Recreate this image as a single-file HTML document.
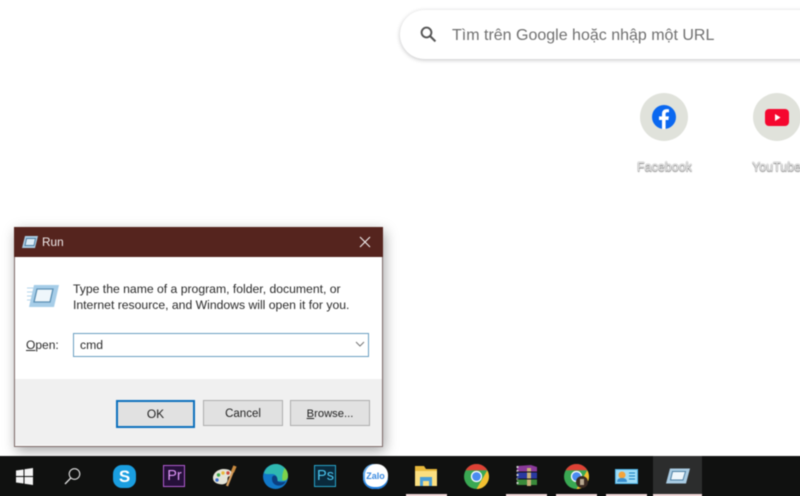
<!DOCTYPE html>
<html><head><meta charset="utf-8"><style>
html,body{margin:0;padding:0;width:800px;height:496px;overflow:hidden;background:#fff;font-family:"Liberation Sans",sans-serif}
#o{position:absolute;left:0;top:0;width:800px;height:496px;overflow:hidden}
#w{position:absolute;left:0;top:0;width:800px;height:496px;filter:blur(.4px)}
.a{position:absolute}
.t{position:absolute;white-space:nowrap}
.btn{position:absolute;top:400px;height:24px;background:#e1e1e1;border:1px solid #adadad;text-align:center;font-size:12px;line-height:26px;color:#222}
</style></head><body><div id="o"><div id="w">

<!-- search box -->
<div class="a" style="left:400px;top:10px;width:440px;height:49px;border-radius:25px;background:#fff;box-shadow:0 1px 4px rgba(32,33,36,.28)"></div>
<svg class="a" style="left:418px;top:24px" width="20" height="20" viewBox="0 0 20 20"><circle cx="8.500" cy="8.500" r="4.900" fill="none" stroke="#555" stroke-width="1.900"/><path d="M12 12l5.400 5.400" stroke="#555" stroke-width="2.100"/></svg>
<div class="t" style="left:452px;top:26px;font-size:16px;line-height:19px;color:#707070">Tìm trên Google hoặc nhập một URL</div>

<!-- shortcuts -->
<div class="a" style="left:640px;top:93px;width:48px;height:48px;border-radius:50%;background:#e0e2db"></div>
<svg class="a" style="left:652px;top:105px" width="24" height="24" viewBox="0 0 24 24"><circle cx="12" cy="12" r="12" fill="#0b68f0"/><path d="M10 24v-9H7v-3.600h3V9c0-3.200 1.800-4.900 4.700-4.900 1.100 0 2.300.2 2.300.2v3h-1.400c-1.600 0-2 .9-2 1.900v2.200h3.300l-.5 3.600h-2.800v9z" fill="#fff"/></svg>
<div class="t" style="left:637px;top:160px;font-size:12.500px;line-height:15px;color:#e6e6e6;text-shadow:0 0 1px #555,0 1px 1px #888">Facebook</div>

<div class="a" style="left:753px;top:93px;width:48px;height:48px;border-radius:50%;background:#e0e2db"></div>
<div class="a" style="left:765px;top:109px;width:24px;height:17px;border-radius:4px;background:#f5072f"></div>
<svg class="a" style="left:765px;top:109px" width="24" height="17"><path d="M10 5l5.500 3.500L10 12z" fill="#fff"/></svg>
<div class="t" style="left:752px;top:160px;font-size:12.500px;line-height:15px;color:#e6e6e6;text-shadow:0 0 1px #555,0 1px 1px #888">YouTube</div>

<!-- dialog -->
<div class="a" style="left:14px;top:227px;width:367px;height:218px;background:#fff;border:1px solid #7e6a68;box-shadow:2px 4px 12px rgba(0,0,0,.35)"></div>
<div class="a" style="left:14px;top:227px;width:369px;height:30px;background:#55241e"></div>
<svg class="a" style="left:21px;top:235px" width="18" height="14" viewBox="0 0 18 14"><path d="M4 1h13l-3 12H1z" fill="#a9cbe2"/><path d="M5.500 3.500h9l-1.500 7H4z" fill="#dcebf5" stroke="#4d7fa3"/></svg>
<div class="t" style="left:42px;top:235px;font-size:11.800px;line-height:15px;color:#f0eaea">Run</div>
<svg class="a" style="left:359px;top:236px" width="12" height="12"><path d="M1 1l10 10M11 1L1 11" stroke="#f2eeee" stroke-width="1.100"/></svg>

<svg class="a" style="left:26px;top:284px" width="34" height="24" viewBox="0 0 34 24"><path d="M8 1h25l-5 22H3z" fill="#a6cde8"/><path d="M1 4h7M1 8h6M1 12h5M1 16h4" stroke="#b4d4ea"/><path d="M11 5h16l-3 13H8z" fill="#eef6fb" stroke="#5b90b4" stroke-width="1.300"/></svg>
<div class="t" style="left:73px;top:281px;font-size:12.200px;line-height:16px;color:#2a2a2a">Type the name of a program, folder, document, or<br>Internet resource, and Windows will open it for you.</div>

<div class="t" style="left:26px;top:337px;font-size:12px;line-height:16px;color:#2a2a2a"><u>O</u>pen:</div>
<div class="a" style="left:73px;top:333px;width:294px;height:22px;border:1px solid #6a9fc2;background:#fff"></div>
<div class="t" style="left:80px;top:337px;font-size:12.200px;line-height:16px;color:#2a2a2a">cmd</div>
<svg class="a" style="left:355px;top:341px" width="10" height="7"><path d="M1 1l4 4 4-4" fill="none" stroke="#777" stroke-width="1"/></svg>

<div class="a" style="left:15px;top:379px;width:367px;height:66px;background:#f0f0f0"></div>
<div class="btn" style="left:116px;width:75px;border:2px solid #0d70bd;line-height:24px">OK</div>
<div class="btn" style="left:203px;width:78px;font-size:11.500px">Cancel</div>
<div class="btn" style="left:290px;width:78px;font-size:11.200px"><u>B</u>rowse...</div>

<!-- taskbar -->
<div class="a" style="left:-6px;top:456px;width:812px;height:46px;background:#101110"></div>
<div class="a" style="left:653px;top:456px;width:49px;height:46px;background:#2c2d2d"></div>
<svg class="a" style="left:16px;top:468px" width="17" height="17" viewBox="0 0 17 17"><path d="M0 2.500l7.500-1v6.500H0zM8.500 1.300L17 0v8H8.500zM0 9h7.500v6.500L0 14.500zM8.500 9H17v8l-8.500-1.300z" fill="#f4f4f4"/></svg>
<svg class="a" style="left:64px;top:467px" width="18" height="18" viewBox="0 0 18 18"><circle cx="10.500" cy="7" r="5.300" fill="none" stroke="#ddd" stroke-width="1.100"/><path d="M6.800 11L1 17" stroke="#ddd" stroke-width="1.300"/></svg>

<div class="a" style="left:113px;top:465px;width:23px;height:23px;border-radius:9px;background:#1a9ee0"></div>
<div class="t" style="left:113px;top:465px;width:23px;text-align:center;font-size:17px;line-height:23px;font-weight:bold;color:#fff">S</div>

<div class="a" style="left:163px;top:465px;width:20px;height:20px;border:1.500px solid #b05bd0;background:#26103a"></div>
<div class="t" style="left:163px;top:465px;width:23px;text-align:center;font-size:14.500px;line-height:23px;color:#dc94f4">Pr</div>

<svg class="a" style="left:212px;top:463px" width="26" height="26" viewBox="0 0 26 26"><path d="M1 15c0-5 5-9 11-9 5 0 8 2 8 5 0 2-3 2-4 3-1 2 0 3-1 5-1 2-5 3-8 2-4-1-6-3-6-6z" fill="#e4e4d8"/><circle cx="6.500" cy="12" r="1.700" fill="#3aa548"/><circle cx="11" cy="10" r="1.700" fill="#e8b83a"/><circle cx="5" cy="17" r="1.700" fill="#3a6fd0"/><circle cx="16" cy="10" r="1.700" fill="#d04a3a"/><path d="M15 23l6-15" stroke="#d8a060" stroke-width="2.300"/><path d="M20.500 9l2.500-6" stroke="#c88a40" stroke-width="3.500"/></svg>

<svg class="a" style="left:263px;top:464px" width="25" height="25" viewBox="0 0 25 25"><circle cx="12.500" cy="12.500" r="12.500" fill="#1178c8"/><path d="M1 9C3 3 8 0 13 0c6 0 12 5 12 12 0 3-2 5-5 5h-5c-1.500 0-2-1-1.500-2 .5-1 0-5-4-5-4 0-7 .5-8.500-1z" fill="#2fb8b0"/><path d="M25 12c0-3-1-6-3.500-8-1 3-3 7-2 12.500 3 .5 5.500-1 5.500-4.500z" fill="#7ed24a"/><path d="M9 15c0 5 5 8 10 6 2-.8 3-2 3.500-3.500-3 1-8 1-8-1 0-3-1-5-3-5s-2.500 1.500-2.500 3.500z" fill="#0c3f80"/></svg>

<div class="a" style="left:314px;top:465px;width:20px;height:20px;border:1.500px solid #27a3c8;background:#0a2a3c"></div>
<div class="t" style="left:314px;top:465px;width:23px;text-align:center;font-size:14.500px;line-height:23px;color:#4cc4ec">Ps</div>

<div class="a" style="left:363px;top:464px;width:25px;height:25px;border-radius:11px;background:#fff;box-shadow:inset 0 -2px 0 #1f7fe0,inset 2px 0 0 #5aa8ee"></div>
<div class="t" style="left:363px;top:464px;width:25px;text-align:center;font-size:9px;line-height:25px;font-weight:bold;color:#3a8ae0">Zalo</div>

<!-- explorer -->
<svg class="a" style="left:414px;top:466px" width="24" height="20" viewBox="0 0 24 20"><path d="M1 0h9l2 3h11v17H1z" fill="#e8b93c"/><path d="M1 5h22v15H1z" fill="#fbdf80"/><path d="M6 11h12v9h-3v-5H9v5H6z" fill="#4a9fd8"/></svg>
<!-- chrome -->
<svg class="a" style="left:464px;top:464px" width="25" height="25" viewBox="0 0 25 25"><circle cx="12.500" cy="12.500" r="12.500" fill="#3aa853"/><path d="M1.700 6.200A12.500 12.500 0 0 1 23.300 6.200H12.500z" fill="#df4135"/><path d="M23.300 6.200A12.500 12.500 0 0 1 12.500 25L17.900 15.600z" fill="#f3c030"/><circle cx="12.500" cy="12.500" r="5.600" fill="#fff"/><circle cx="12.500" cy="12.500" r="4.400" fill="#4a8cf0"/></svg>
<!-- winrar -->
<svg class="a" style="left:516px;top:465px" width="22" height="21" viewBox="0 0 22 21"><path d="M1 1l14-1 6 2v5H1z" fill="#8a3a9a"/><rect x="1" y="7" width="20" height="7" fill="#2a3aa0"/><rect x="1" y="14" width="20" height="6" fill="#3a8a3a"/><rect x="11" y="3" width="4" height="18" fill="#c8b078"/><path d="M1.500 1v19" stroke="#ccc" stroke-width="2" stroke-dasharray="2 2"/><path d="M1 7h20M1 14h20" stroke="#111"/></svg>
<!-- chrome profile -->
<svg class="a" style="left:564px;top:464px" width="25" height="25" viewBox="0 0 25 25"><circle cx="12.500" cy="12.500" r="12.500" fill="#3aa853"/><path d="M1.700 6.200A12.500 12.500 0 0 1 23.300 6.200H12.500z" fill="#df4135"/><path d="M23.300 6.200A12.500 12.500 0 0 1 12.500 25L17.900 15.600z" fill="#f3c030"/><circle cx="12.500" cy="12.500" r="5.600" fill="#fff"/><circle cx="12.500" cy="12.500" r="4.400" fill="#4a8cf0"/><circle cx="18" cy="18" r="6" fill="#3a2a22"/><rect x="16" y="15" width="4" height="6" fill="#b8a890"/></svg>
<!-- control panel -->
<svg class="a" style="left:615px;top:469px" width="23" height="15" viewBox="0 0 23 15"><rect width="23" height="15" fill="#4db4e8"/><rect x="1" y="1" width="21" height="13" fill="#9fdcf6"/><circle cx="7" cy="6" r="3.500" fill="#f4a43a"/><path d="M2 13c0-3 2-4 5-4s5 1 5 4z" fill="#3a8fd0"/><path d="M14 4h6M14 7h6M14 10h6" stroke="#1a80c0"/></svg>
<!-- run -->
<svg class="a" style="left:665px;top:468px" width="25" height="16" viewBox="0 0 25 16"><path d="M5 .5h20L21 15.500H1z" fill="#a9cbe2"/><path d="M7.500 3.500h13L18 12H5.500z" fill="#eef6fb" stroke="#4d7fa3"/></svg>

<!-- pink underlines of running apps -->
<div class="a" style="left:406px;top:494px;width:41px;height:8px;background:#f0d8d8"></div>
<div class="a" style="left:506px;top:494px;width:41px;height:8px;background:#f0d8d8"></div>
<div class="a" style="left:556px;top:494px;width:41px;height:8px;background:#f0d8d8"></div>
<div class="a" style="left:606px;top:494px;width:41px;height:8px;background:#f0d8d8"></div>
<div class="a" style="left:653px;top:494px;width:49px;height:8px;background:#f0d8d8"></div>
</div></div></body></html>
